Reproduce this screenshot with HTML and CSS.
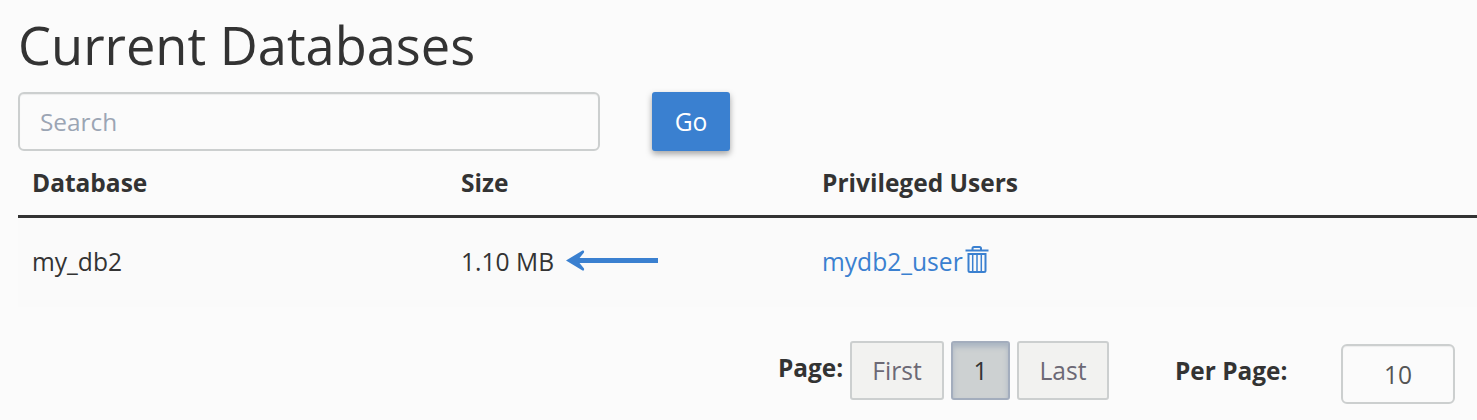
FILE: index.html
```html
<!DOCTYPE html>
<html lang="en">
<head>
<meta charset="utf-8">
<title>Current Databases</title>
<link rel="stylesheet" href="styles.css">
</head>
<body>
<main class="page">
  <h1 class="title">Current Databases</h1>
  <form class="search">
    <input class="search-input" type="text" placeholder="Search">
    <button class="go" type="button">Go</button>
  </form>
  <div class="table">
    <div class="row head"><span>Database</span><span>Size</span><span>Privileged Users</span></div>
    <div class="row item">
      <span>my_db2</span>
      <span class="size">1.10 MB
        <svg class="arrow" width="94" height="24" viewBox="0 0 94 24"><path d="M7 11.500H93" stroke="#3a80d0" stroke-width="5" fill="none"/><path d="M1 11.500L17.500 1.500Q19.500 1 19 3.500L12.500 11.500L19 19.500Q19.500 22 17.500 21.500Z" fill="#3a80d0"/></svg>
      </span>
      <span class="user"><a class="link">mydb2_user</a><svg class="trash" width="24" height="28" viewBox="0 0 24 28" fill="none" stroke="#3a80d0"><path stroke-width="2" d="M.5 5.500H23.500M7.500 5V3.500Q7.500 2 9 2H14.500Q16 2 16 3.500V5M3.500 9H20.500V25.500Q20.500 27 19 27H5Q3.500 27 3.500 25.500ZM2.500 9H21.500"/><path stroke-width="1.500" d="M7.700 10V26M12 10V26M16.300 10V26"/></svg></span>
    </div>
  </div>
  <div class="footer">
    <span class="label">Page:</span>
    <div class="pager"><span class="btn">First</span><span class="btn active">1</span><span class="btn last">Last</span></div>
    <span class="label per">Per Page:</span>
    <span class="count">10</span>
  </div>
</main>
</body>
</html>
```
FILE: styles.css
```css
* { box-sizing: border-box; }
body { margin: 0; background: #fbfbfb; color: #333; font: 24.6px/36px "Open Sans", sans-serif; overflow: hidden; }
.page { padding-left: 18px; height: 420px; }
.title { margin: 0; height: 92px; padding-top: 9px; font-size: 52.4px; line-height: 72px; font-weight: 400; }
.search { display: flex; gap: 52px; height: 65px; }
.search-input { width: 582px; height: 59px; border: 2px solid #cccfcf; border-radius: 6px; padding: 0 20px; font: inherit; font-size: 24.4px; background: #fbfbfb; box-shadow: inset 0 1px 1px rgba(0,0,0,.06); }
.search-input::placeholder { color: #9ba5b4; opacity: 1; }
.go { width: 78px; height: 59px; border: 0; border-radius: 3px; padding-bottom: 1px; background: #3a80d0; color: #fff; font: inherit; box-shadow: 0 3px 6px rgba(0,0,0,.35); }
.row { display: grid; grid-template-columns: 429px 361px 1fr; padding-left: 14px; }
.head { height: 61px; padding-top: 8px; border-bottom: 3px solid #333; font-size: 24.5px; font-weight: 700; }
.item { height: 89px; padding-bottom: 1px; background: #fafafa; align-items: center; }
.size, .user { display: flex; align-items: center; }
.arrow { margin: -2px 0 0 11px; }
.link { color: #3a80d0; }
.trash { margin: -6px 0 0 2px; }
.footer { display: flex; align-items: flex-start; padding: 34px 0 0 760px; }
.label { padding-top: 9px; font-size: 24.4px; font-weight: 700; width: 72px; white-space: nowrap; }
.pager { display: flex; gap: 7px; }
.btn { width: 94px; height: 59px; line-height: 55px; text-align: center; border: 2px solid #cccfcf; border-radius: 3px; background: #f2f2f0; color: #6c6975; }
.active { width: 59px; background: #cdd1d2; border-color: #a3adbd; color: #333; box-shadow: inset 0 4px 5px rgba(120,140,170,.4); }
.last { width: 92px; }
.per { margin-left: 66px; width: 166px; padding-top: 12px; }
.count { width: 114px; height: 60px; margin-top: 3px; line-height: 58px; text-align: center; border: 2px solid #cccfcf; border-radius: 6px; color: #555; box-shadow: inset 0 1px 1px rgba(0,0,0,.06); }
```
